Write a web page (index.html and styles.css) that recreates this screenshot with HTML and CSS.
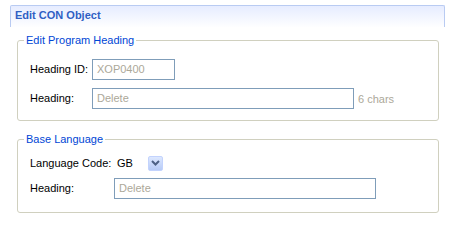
FILE: index.html
```html
<!DOCTYPE html>
<html lang="en">
    <head>
        <meta charset="UTF-8" />
        <meta name="viewport" content="width=device-width, initial-scale=1.0" />
        <title>Edit CON Object</title>
        <link rel="stylesheet" href="styles.css">
    </head>
    <body>
        <div class="page-header">
            <h1 class="page-title">Edit CON Object</h1>
        </div>
        <fieldset class="group">
            <legend class="group-title">Edit Program Heading</legend>
            <div class="form-grid program">
                <label class="field-label">Heading ID:</label>
                <div class="field-box short">XOP0400</div>
                <label class="field-label">Heading:</label>
                <div class="field-line">
                    <div class="field-box long">Delete</div>
                    <span class="field-hint">6 chars</span>
                </div>
            </div>
        </fieldset>
        <fieldset class="group">
            <legend class="group-title">Base Language</legend>
            <div class="form-grid language">
                <label class="field-label">Language Code:</label>
                <div class="field-line">
                    <span class="code-value">GB</span>
                    <span class="drop-button">
                        <svg width="9" height="6" viewBox="0 0 9 6">
                            <path d="M1 1 L4.5 4.5 L8 1" fill="none" stroke="#4d6185" stroke-width="2"/>
                        </svg>
                    </span>
                </div>
                <label class="field-label">Heading:</label>
                <div class="field-box wide">Delete</div>
            </div>
        </fieldset>
    </body>
</html>
```

FILE: styles.css
```css
html {
    font-family: 'Liberation Sans', Arial, sans-serif;
    font-size: 11px;
}
body {
    margin: 0;
    background: #fff;
    color: #000;
}
.page-header {
    margin: 5px 11px 0 10px;
    height: 22px;
    border: 1px solid #b9cbf2;
    border-bottom: none;
    border-radius: 2px 2px 0 0;
    background: linear-gradient(#e6ecff, #fff 22px);
    box-sizing: border-box;
}
.page-title {
    margin: 0;
    padding: 2px 0 0 4px;
    font-size: 11px;
    font-weight: bold;
    line-height: 15px;
    color: #2f5fc4;
}
.group {
    margin: 7px 17px 0 17px;
    padding: 6px 0 11px 12px;
    border: 1px solid #d0d0bf;
    border-radius: 3px;
}
.group + .group {
    margin-top: 12px;
    padding-bottom: 13px;
}
.group-title {
    margin-left: -6px;
    padding: 0 2px;
    color: #0046d5;
    line-height: 13px;
}
.form-grid {
    display: grid;
    row-gap: 8px;
    align-items: center;
}
.form-grid.program {
    grid-template-columns: 62px auto;
    margin-top: 6px;
}
.form-grid.language {
    grid-template-columns: 84px auto;
    row-gap: 5px;
    margin-top: 1px;
}
.field-label {
    line-height: 13px;
}
.field-line {
    display: flex;
    align-items: center;
    gap: 4px;
}
.field-box {
    height: 21px;
    box-sizing: border-box;
    border: 1px solid #7f9db9;
    padding: 0 4px;
    line-height: 19px;
    color: #aca899;
}
.field-box.short {
    width: 83px;
}
.field-box.long {
    width: 262px;
}
.field-box.wide {
    width: 262px;
}
.field-hint {
    color: #aca899;
}
.language .field-line {
    height: 20px;
    gap: 0;
}
.code-value {
    width: 34px;
    padding-left: 3px;
    box-sizing: border-box;
}
.drop-button {
    display: flex;
    align-items: center;
    justify-content: center;
    width: 15px;
    height: 15px;
    box-sizing: border-box;
    border: 1px solid #c3d3fd;
    border-radius: 2px;
    background: linear-gradient(#dde8ff, #b7cbf6);
}
```
